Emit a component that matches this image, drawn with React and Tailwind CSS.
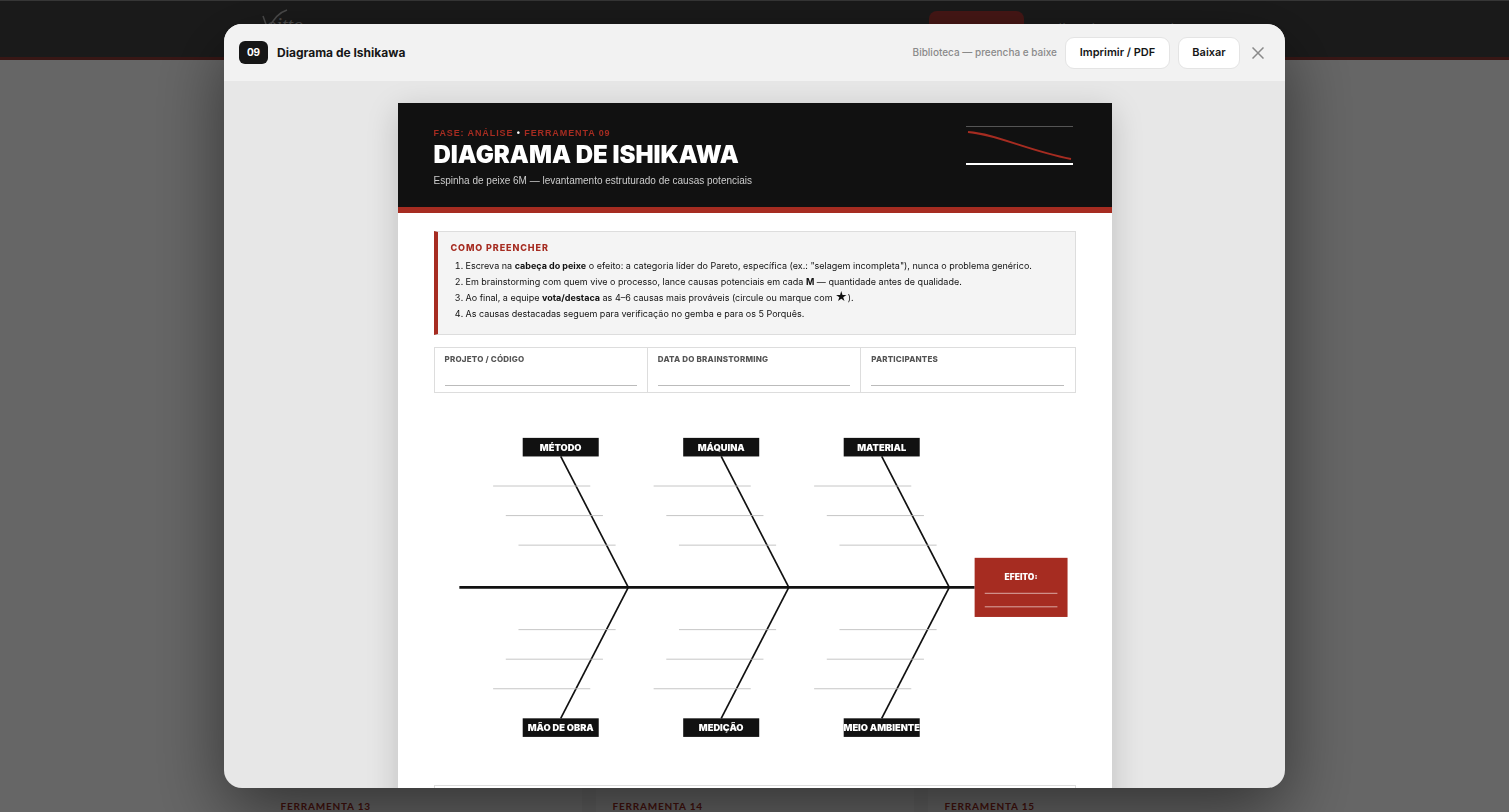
import React, { useState } from "react";

const instructions = [
  <>Escreva na <strong>cabeça do peixe</strong> o efeito: a categoria líder do Pareto, específica (ex.: "selagem incompleta"), nunca o problema genérico.</>,
  <>Em brainstorming com quem vive o processo, lance causas potenciais em cada <strong>M</strong> — quantidade antes de qualidade.</>,
  <>Ao final, a equipe <strong>vota/destaca</strong> as 4–6 causas mais prováveis (circule ou marque com <span className="text-xs leading-none">★</span>).</>,
  <>As causas destacadas seguem para verificação no gemba e para os 5 Porquês.</>,
];

const fields = [
  { id: "projeto", label: "Projeto / Código" },
  { id: "data", label: "Data do brainstorming" },
  { id: "participantes", label: "Participantes" },
];

const bones = [
  { x: 150, top: "MÉTODO", bottom: "MÃO DE OBRA" },
  { x: 340, top: "MÁQUINA", bottom: "MEDIÇÃO" },
  { x: 530, top: "MATERIAL", bottom: "MEIO AMBIENTE" },
];

const BoneLabel = ({ x, y, text }) => (
  <g>
    <rect x={x - 45} y={y} width="90" height="22" fill="#111" />
    <text
      x={x}
      y={y + 15}
      textAnchor="middle"
      className="fill-white font-['Inter'] text-[11px] font-black"
    >
      {text}
    </text>
  </g>
);

const Fishbone = () => (
  <svg viewBox="0 0 760 420" className="block w-full" role="img" aria-label="Diagrama de Ishikawa 6M">
    <line x1="30" y1="210" x2="640" y2="210" stroke="#111" strokeWidth="3" />
    {bones.map((bone) => (
      <g key={bone.x}>
        <line x1={bone.x} y1="55" x2={bone.x + 80} y2="210" stroke="#111" strokeWidth="2" />
        <line x1={bone.x} y1="365" x2={bone.x + 80} y2="210" stroke="#111" strokeWidth="2" />
        {[0, 1, 2].map((i) => (
          <g key={i} stroke="#bbb" strokeWidth="1">
            <line x1={bone.x - 80 + i * 15} y1={90 + i * 35} x2={bone.x + 35 + i * 15} y2={90 + i * 35} />
            <line x1={bone.x - 80 + i * 15} y1={330 - i * 35} x2={bone.x + 35 + i * 15} y2={330 - i * 35} />
          </g>
        ))}
        <BoneLabel x={bone.x} y={33} text={bone.top} />
        <BoneLabel x={bone.x} y={365} text={bone.bottom} />
      </g>
    ))}
    <rect x="640" y="175" width="110" height="70" fill="#a62c21" />
    <text x="695" y="201" textAnchor="middle" className="fill-white font-['Inter'] text-[10px] font-black">
      EFEITO:
    </text>
    <line x1="652" y1="217" x2="738" y2="217" stroke="#fff" strokeOpacity="0.7" />
    <line x1="652" y1="233" x2="738" y2="233" stroke="#fff" strokeOpacity="0.7" />
  </svg>
);

const PageBehind = () => (
  <div className="flex h-screen flex-col justify-between overflow-hidden bg-white" aria-hidden="true">
    <header className="h-[60px] border-t border-b-3 border-t-[#888] border-b-[#8c3a36] bg-[#424242]">
      <div className="mx-auto flex max-w-[986px] items-start justify-between px-px">
        <div className="relative pt-3">
          <span className="pl-1 font-['Liberation_Serif'] text-xl leading-6 text-[#bbb] italic">oitto</span>
          <svg className="absolute top-1 -left-1 h-8 w-8" viewBox="0 0 32 32" fill="none" stroke="#bbb" strokeWidth="1.5">
            <path d="M4 11l5 14C13 16 18 8 28 5" />
          </svg>
        </div>
        <nav className="flex gap-5 pt-[10px] pr-12 font-['Open_Sans'] text-xs leading-9 text-[#bbb]">
          <span className="h-9 w-[95px] rounded-lg bg-[#b03a36]" />
          <span>Política de Gestão Produtos</span>
        </nav>
      </div>
    </header>
    <div className="mx-auto grid w-full max-w-[982px] grid-cols-3 gap-[14px] bg-[#f5f5f5]">
      {["13", "14", "15"].map((n) => (
        <div key={n} className="h-10 bg-white px-[17px] pt-7 font-['Lato'] text-[10px] leading-3 font-bold tracking-[0.08em] text-[#a62c21]">
          FERRAMENTA {n}
        </div>
      ))}
    </div>
  </div>
);

const SheetHeader = () => (
  <div className="flex items-start justify-between border-b-6 border-[#a62c21] bg-[#111] pt-[22px] pr-[39px] pb-[18px] pl-9">
    <div>
      <p className="font-['Liberation_Sans'] text-[9px] leading-4 font-bold tracking-widest text-[#a62c21]">
        FASE: ANÁLISE <span className="text-white">•</span> FERRAMENTA 09
      </p>
      <h2 className="font-['Inter'] text-2xl leading-7 font-black text-white">DIAGRAMA DE ISHIKAWA</h2>
      <p className="mt-1 text-[10px] leading-4 text-[#ccc]">
        Espinha de peixe 6M — levantamento estruturado de causas potenciais
      </p>
    </div>
    <svg className="h-10 w-[107px]" viewBox="0 0 107 40" fill="none">
      <path d="M0 1.5h107" stroke="#555" />
      <path d="M2 7C30 9 60 25 105 34" stroke="#a62c21" strokeWidth="2" />
      <path d="M0 39h107" stroke="#fff" strokeWidth="2" />
    </svg>
  </div>
);

const Sheet = () => (
  <article className="mx-auto w-full max-w-[714px] bg-white font-['Liberation_Sans'] text-[#111] shadow-[0_8px_30px_rgba(0,0,0,0.18)]">
    <SheetHeader />
    <div className="px-9 pt-[18px] pb-10">
      <section className="border border-l-4 border-[#ddd] border-l-[#a62c21] bg-[#f4f4f4] px-[13px] pt-2 pb-3">
        <h3 className="font-['Inter'] text-[9px] leading-4 font-extrabold tracking-widest text-[#a62c21]">COMO PREENCHER</h3>
        <ol className="mt-[2px] list-decimal pl-[15px] font-['Inter'] text-[9px] leading-4">
          {instructions.map((text, i) => (
            <li key={i}>{text}</li>
          ))}
        </ol>
      </section>

      <div className="mt-3 grid grid-cols-3 divide-x divide-[#ddd] border border-[#ddd]">
        {fields.map((field) => (
          <div key={field.id} className="px-[10px] pt-1 pb-[6px]">
            <label htmlFor={field.id} className="block font-['Inter'] text-[8px] leading-[14px] font-extrabold tracking-wide text-[#555] uppercase">
              {field.label}
            </label>
            <input id={field.id} type="text" className="block h-5 w-full border-b border-[#bbb] text-[10px] outline-none" />
          </div>
        ))}
      </div>

      <div className="mt-[17px]">
        <Fishbone />
      </div>
      <div className="mt-5 h-24 border border-[#ddd]" />
    </div>
  </article>
);

const App = () => {
  const [open, setOpen] = useState(true);

  return (
    <div className="min-h-screen">
      <PageBehind />
      {open && (
        <div className="fixed inset-0 flex items-center justify-center bg-black/60 p-6">
          <div
            role="dialog"
            aria-modal="true"
            aria-labelledby="dialog-title"
            className="flex h-full w-full max-w-[1061px] flex-col overflow-hidden rounded-[18px] bg-[#e7e7e7] font-['Inter'] shadow-[0_24px_70px_rgba(0,0,0,0.5)]"
          >
            <div className="flex h-[57px] shrink-0 items-center justify-between bg-[#f2f2f2] pr-[17px] pl-[15px]">
              <div className="flex items-center gap-[9px]">
                <span className="flex h-[23px] w-[29px] items-center justify-center rounded-md bg-[#161616] text-[10px] font-bold text-white">09</span>
                <h1 id="dialog-title" className="text-xs font-bold text-[#161616]">Diagrama de Ishikawa</h1>
              </div>
              <div className="flex items-center gap-2">
                <span className="text-[10px] font-medium text-[#8a8a8a]">Biblioteca — preencha e baixe</span>
                <button
                  type="button"
                  onClick={() => window.print()}
                  className="h-8 w-[105px] rounded-[9px] border border-[#e4e4e4] bg-white text-[11px] font-semibold text-[#161616]"
                >
                  Imprimir / PDF
                </button>
                <button type="button" className="h-8 w-[62px] rounded-[9px] border border-[#e4e4e4] bg-white text-[11px] font-semibold text-[#161616]">
                  Baixar
                </button>
                <button type="button" aria-label="Fechar" onClick={() => setOpen(false)} className="flex h-8 w-5 items-center justify-center text-[#8a8a8a]">
                  <svg className="h-3 w-3" viewBox="0 0 12 12" fill="none" stroke="currentColor" strokeWidth="1.5">
                    <path d="M.5 .5l11 11M11.5 .5l-11 11" />
                  </svg>
                </button>
              </div>
            </div>
            <div className="min-h-0 flex-1 overflow-hidden pt-[22px]">
              <Sheet />
            </div>
          </div>
        </div>
      )}
    </div>
  );
};

export default App;
